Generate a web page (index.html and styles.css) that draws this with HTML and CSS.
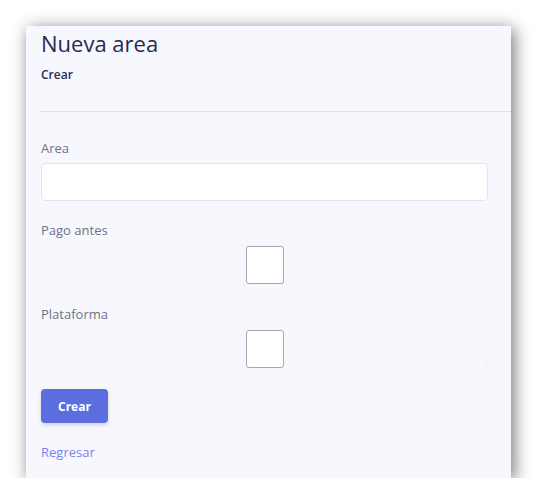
FILE: index.html
```html
<!DOCTYPE html>
<html lang="es">
<head>
    <meta charset="UTF-8">
    <meta name="viewport" content="width=device-width, initial-scale=1.0">
    <title>Nueva area</title>
    <link rel="stylesheet" href="styles.css">
</head>
<body>
    <div class="panel">
        <div class="page-header">
            <h1>Nueva area</h1>
            <div class="breadcrumb">Crear</div>
        </div>

        <form class="form">
            <div class="form-group">
                <label for="area">Area</label>
                <input type="text" id="area" class="form-control">
            </div>

            <div class="form-group">
                <label>Pago antes</label>
                <div class="check-row">
                    <span class="check-box"></span>
                </div>
            </div>

            <div class="form-group">
                <label>Plataforma</label>
                <div class="check-row">
                    <span class="check-box"></span>
                </div>
            </div>

            <button type="button" class="btn-primary">Crear</button>
        </form>

        <a href="#" class="back-link">Regresar</a>
    </div>
</body>
</html>
```

FILE: styles.css
```css
body {
    margin: 0;
    background-color: #fff;
    font-family: "Open Sans", Arial, sans-serif;
}
.panel {
    margin: 26px 0 0 26px;
    width: 485px;
    height: 452px;
    padding: 0 0 0 15px;
    background-color: #f7f8fd;
    box-shadow: 3px 3px 16px rgba(0,0,0,0.55);
    box-sizing: border-box;
}
.page-header {
    border-bottom: 1px solid #dfe1e8;
    padding-bottom: 28px;
}
.page-header h1 {
    margin: 0;
    padding-top: 2px;
    font-size: 22px;
    font-weight: 500;
    color: #2a2850;
    line-height: 30px;
}
.breadcrumb {
    margin-top: 8px;
    font-size: 12px;
    font-weight: 600;
    color: #2c2a4d;
}
.form {
    width: 447px;
    padding-top: 27px;
}
.form-group {
    margin-bottom: 20px;
}
.form-group label {
    display: block;
    font-size: 13px;
    line-height: 18px;
    color: #6b7385;
    margin-bottom: 6px;
}
.form-control {
    display: block;
    width: 100%;
    height: 38px;
    box-sizing: border-box;
    border: 1px solid #e3e5ec;
    border-radius: 4px;
    background-color: #fff;
}
.check-row {
    display: flex;
    justify-content: center;
    border: 1px solid #f3f4fa;
    border-radius: 4px;
    margin-top: 4px;
}
.check-box {
    width: 38px;
    height: 38px;
    box-sizing: border-box;
    border: 1px solid #a6a8ae;
    border-radius: 3px;
    background-color: #fff;
}
.btn-primary {
    display: block;
    margin-top: 0;
    padding: 0 17px;
    height: 34px;
    border: none;
    border-radius: 4px;
    background-color: #5a6ee0;
    color: #fff;
    font-family: "Open Sans", Arial, sans-serif;
    font-size: 12px;
    font-weight: 700;
    box-shadow: 0 2px 4px rgba(0,0,0,0.15);
}
.back-link {
    display: inline-block;
    margin-top: 20px;
    font-size: 13px;
    color: #7b82ea;
    text-decoration: none;
}
```
